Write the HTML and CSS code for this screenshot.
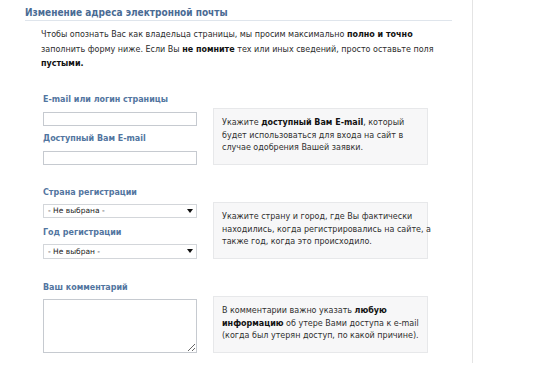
FILE: index.html
```html
<!DOCTYPE html>
<html lang="ru">
<head>
<meta charset="utf-8">
<link rel="stylesheet" href="styles.css">
</head>
<body>
<div class="page">
  <h1 class="title">Изменение адреса электронной почты</h1>
  <p class="intro">Чтобы опознать Вас как владельца страницы, мы просим максимально <b>полно и точно</b><br>заполнить форму ниже. Если Вы <b>не помните</b> тех или иных сведений, просто оставьте поля<br><b>пустыми.</b></p>

  <div class="row row-1">
    <div class="fields">
      <div class="label">E-mail или логин страницы</div>
      <input class="field" type="text">
      <div class="label label-next">Доступный Вам E-mail</div>
      <input class="field" type="text">
    </div>
    <div class="hint">Укажите <b>доступный Вам E-mail</b>, который<br>будет использоваться для входа на сайт в<br>случае одобрения Вашей заявки.</div>
  </div>

  <div class="row row-2">
    <div class="fields">
      <div class="label">Страна регистрации</div>
      <div class="select"><span>- Не выбрана -</span><span class="arrow"></span></div>
      <div class="label label-next2">Год регистрации</div>
      <div class="select select-tall"><span>- Не выбран -</span><span class="arrow"></span></div>
    </div>
    <div class="hint">Укажите страну и город, где Вы фактически<br>находились, когда регистрировались на сайте, а<br>также год, когда это происходило.</div>
  </div>

  <div class="row row-3">
    <div class="fields">
      <div class="label">Ваш комментарий</div>
      <textarea class="comment"></textarea>
    </div>
    <div class="hint">В комментарии важно указать <b>любую</b><br><b>информацию</b> об утере Вами доступа к e-mail<br>(когда был утерян доступ, по какой причине).</div>
  </div>
</div>
</body>
</html>
```

FILE: styles.css
```css
html, body {
  margin: 0;
  padding: 0;
  background: #ffffff;
}

body {
  font-family: "DejaVu Sans", Tahoma, sans-serif;
  font-size: 8px;
  color: #2b2b2b;
}

.page {
  width: 473px;
  height: 363px;
  border-right: 1px solid #e4e4e4;
  box-sizing: border-box;
}

.title {
  margin: 0 20px 0 25px;
  padding-top: 6px;
  height: 14px;
  line-height: 14px;
  font-family: "DejaVu Sans Condensed", "DejaVu Sans", sans-serif;
  font-size: 10px;
  font-weight: bold;
  color: #4a6b94;
  border-bottom: 1px solid #dfe5ec;
}

.intro {
  margin: 7px 0 0 41px;
  line-height: 14.5px;
  white-space: nowrap;
}

.intro b, .hint b {
  color: #111;
}

.row {
  display: flex;
  margin-left: 43px;
}

.row-1 { margin-top: 22px; }
.row-2 { margin-top: 22px; }
.row-3 { margin-top: 23px; }

.fields {
  display: flex;
  flex-direction: column;
  width: 154px;
}

.label {
  height: 12px;
  line-height: 12px;
  font-size: 8px;
  font-weight: bold;
  color: #5275a0;
  margin-bottom: 6px;
  white-space: nowrap;
}

.row-2 .label, .row-3 .label {
  margin-bottom: 5px;
}

.label-next { margin-top: 7px; }
.label-next2 { margin-top: 9px; }

.field {
  box-sizing: border-box;
  width: 154px;
  height: 14px;
  margin: 0;
  padding: 0 3px;
  border: 1px solid #c6cad0;
  background: #fff;
  outline: none;
}

.select {
  box-sizing: border-box;
  width: 154px;
  height: 14px;
  border: 1px solid #d3d6da;
  background: #fff;
  display: flex;
  align-items: center;
  justify-content: space-between;
  padding: 0 3px 0 4px;
  font-size: 7.5px;
  color: #222;
}

.select-tall { height: 15px; }

.arrow {
  width: 0;
  height: 0;
  border-left: 3px solid transparent;
  border-right: 3px solid transparent;
  border-top: 4px solid #111;
}

.comment {
  box-sizing: border-box;
  display: block;
  width: 154px;
  height: 54px;
  margin: 0;
  padding: 2px;
  border: 1px solid #c6cad0;
  resize: both;
  font-family: inherit;
  font-size: 8px;
  outline: none;
}

.hint {
  align-self: flex-end;
  box-sizing: border-box;
  width: 215px;
  margin-left: 16px;
  padding: 8px 6px 9px 8px;
  line-height: 12.5px;
  background: #f7f7f8;
  border: 1px solid #e7e8ea;
  white-space: nowrap;
  color: #2f2f2f;
}
```
